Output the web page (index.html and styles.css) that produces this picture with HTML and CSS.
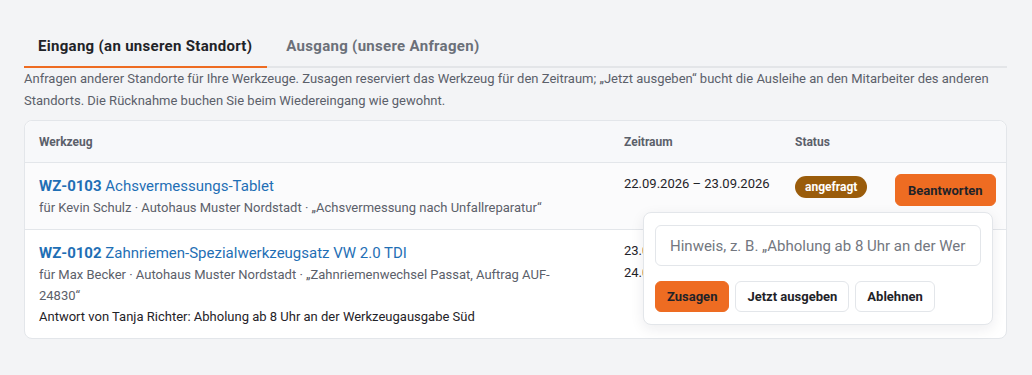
FILE: index.html
```html
<!DOCTYPE html>
<html lang="de">
<head>
  <meta charset="UTF-8" />
  <title>Werkzeug-Anfragen</title>
  <meta name="viewport" content="width=device-width, initial-scale=1.0" />
  <link rel="stylesheet" href="styles.css">
</head>
<body>
  <div class="page">
    <nav class="tabs">
      <a class="tab active">Eingang (an unseren Standort)</a>
      <a class="tab">Ausgang (unsere Anfragen)</a>
    </nav>

    <p class="intro">Anfragen anderer Standorte für Ihre Werkzeuge. Zusagen reserviert das Werkzeug für den Zeitraum; „Jetzt ausgeben“ bucht die Ausleihe an den Mitarbeiter des anderen Standorts. Die Rücknahme buchen Sie beim Wiedereingang wie gewohnt.</p>

    <div class="card">
      <table class="requests">
        <colgroup>
          <col class="c-tool">
          <col class="c-date">
          <col class="c-status">
          <col class="c-action">
        </colgroup>
        <thead>
          <tr>
            <th>Werkzeug</th>
            <th>Zeitraum</th>
            <th>Status</th>
            <th></th>
          </tr>
        </thead>
        <tbody>
          <tr class="active-row">
            <td>
              <div class="tool"><b>WZ-0103</b> Achsvermessungs-Tablet</div>
              <div class="meta">für Kevin Schulz · Autohaus Muster Nordstadt · „Achsvermessung nach Unfallreparatur“</div>
            </td>
            <td class="dates nowrap">22.09.2026 – 23.09.2026</td>
            <td><span class="badge">angefragt</span></td>
            <td class="action">
              <button class="btn primary">Beantworten</button>
              <div class="reply">
                <input type="text" placeholder="Hinweis, z. B. „Abholung ab 8 Uhr an der Werkzeugausgabe Süd“">
                <div class="reply-buttons">
                  <button class="btn primary">Zusagen</button>
                  <button class="btn">Jetzt ausgeben</button>
                  <button class="btn">Ablehnen</button>
                </div>
              </div>
            </td>
          </tr>
          <tr>
            <td>
              <div class="tool"><b>WZ-0102</b> Zahnriemen-Spezialwerkzeugsatz VW 2.0 TDI</div>
              <div class="meta">für Max Becker · Autohaus Muster Nordstadt · „Zahnriemenwechsel Passat, Auftrag AUF-24830“</div>
              <div class="answer">Antwort von Tanja Richter: Abholung ab 8 Uhr an der Werkzeugausgabe Süd</div>
            </td>
            <td class="dates">23.09.2026 –<br>24.09.2026</td>
            <td><span class="badge">zugesagt</span></td>
            <td class="action"></td>
          </tr>
        </tbody>
      </table>
    </div>
  </div>
</body>
</html>
```

FILE: styles.css
```css
body {
  margin: 0;
  background: #f3f4f6;
  color: #1f2328;
  font-family: Roboto, 'Liberation Sans', sans-serif;
}
.page {
  padding: 30px 25px 20px 24px;
}
.tabs {
  display: flex;
  border-bottom: 2px solid #e3e5e8;
}
.tab {
  padding: 7px 15px 11px 14px;
  margin-bottom: -2px;
  border-bottom: 2px solid transparent;
  font-size: 15px;
  font-weight: 700;
  color: #6b7079;
  letter-spacing: 0.3px;
}
.tab + .tab {
  margin-left: 5px;
}
.tab.active {
  color: #1f2328;
  border-bottom-color: #ee6c22;
}
.intro {
  margin: 0 0 8px;
  font-size: 13px;
  line-height: 22px;
  color: #5b606a;
}
.card {
  background: #fff;
  border: 1px solid #e3e6ea;
  border-radius: 8px;
}
.requests {
  width: 100%;
  border-collapse: collapse;
  table-layout: fixed;
}
.c-tool { width: 585px; }
.c-date { width: 171px; }
.c-status { width: 100px; }
.requests th {
  text-align: left;
  font-size: 12px;
  font-weight: 700;
  color: #5b606a;
  padding: 0 14px;
  height: 41px;
  background: #f7f8fa;
  border-bottom: 1px solid #e3e6ea;
}
.requests th:first-child {
  border-top-left-radius: 8px;
}
.requests th:last-child {
  border-top-right-radius: 8px;
}
.requests td {
  vertical-align: top;
  padding: 12px 14px 11px;
  font-size: 13px;
  line-height: 21px;
}
.requests tbody tr + tr td {
  border-top: 1px solid #e3e6ea;
}
.active-row td {
  background: #fbfbfc;
}
.tool {
  font-size: 15px;
  line-height: 22px;
  color: #1f6fb5;
}
.tool b {
  font-weight: 700;
}
.meta {
  max-width: 530px;
  color: #5b606a;
}
.answer {
  color: #1f2328;
}
.dates {
  color: #1f2328;
  padding-top: 10px !important;
  line-height: 22px !important;
}
.nowrap {
  white-space: nowrap;
}
.badge {
  display: inline-block;
  margin-top: 1px;
  padding: 0 10px;
  height: 22px;
  line-height: 22px;
  border-radius: 11px;
  background: #9a5c0b;
  color: #fff;
  font-size: 12px;
  font-weight: 700;
}
.action {
  position: relative;
  text-align: right;
  padding-right: 13px !important;
}
.btn {
  font-family: inherit;
  font-size: 13px;
  font-weight: 700;
  color: #1f2328;
  background: #fff;
  border: 1px solid #e3e6ea;
  border-radius: 6px;
  height: 31px;
  padding: 0 11px;
  cursor: pointer;
}
.btn.primary {
  background: #ee6c22;
  border-color: #ee6c22;
}
.action > .btn {
  height: 32px;
  margin-top: -1px;
  padding: 0 12px;
}
.reply {
  position: absolute;
  top: 49px;
  right: 13px;
  width: 326px;
  padding: 12px 11px 12px 11px;
  background: #fff;
  border: 1px solid #e3e6ea;
  border-radius: 8px;
  box-shadow: 0 4px 14px rgba(20, 30, 50, 0.08);
  text-align: left;
  z-index: 2;
}
.reply input {
  box-sizing: border-box;
  width: 100%;
  height: 41px;
  padding: 0 14px;
  border: 1px solid #e3e6ea;
  border-radius: 6px;
  font-family: inherit;
  font-size: 15px;
  color: #1f2328;
}
.reply input::placeholder {
  color: #737780;
}
.reply-buttons {
  display: flex;
  gap: 6px;
  margin-top: 15px;
}
```
